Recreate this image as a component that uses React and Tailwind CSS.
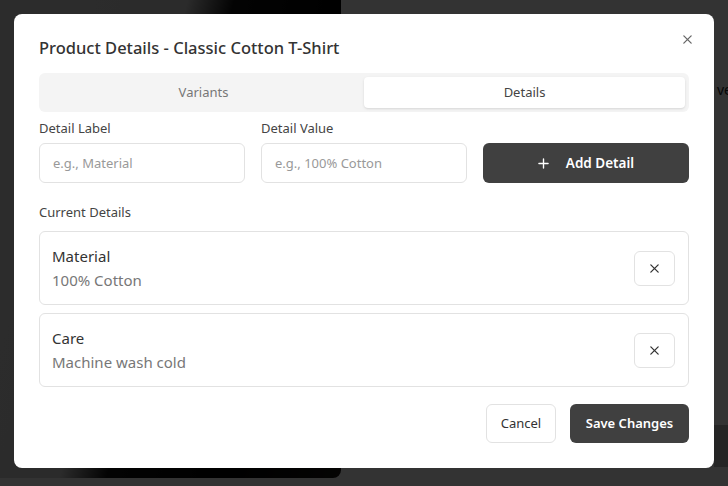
import React, { useState } from "react";

const font = { fontFamily: '"Noto Sans", "Open Sans", Arial, sans-serif' };

function XIcon({ className }) {
  return (
    <svg viewBox="0 0 12 12" className={className} fill="none" stroke="currentColor" strokeWidth="1.4" strokeLinecap="round">
      <path d="M2 2 L10 10 M10 2 L2 10" />
    </svg>
  );
}

function PlusIcon({ className }) {
  return (
    <svg viewBox="0 0 12 12" className={className} fill="none" stroke="currentColor" strokeWidth="1.5" strokeLinecap="round">
      <path d="M6 1 V11 M1 6 H11" />
    </svg>
  );
}

export default function App() {
  const [tab, setTab] = useState("details");
  const [details, setDetails] = useState([
    { label: "Material", value: "100% Cotton" },
    { label: "Care", value: "Machine wash cold" },
  ]);

  return (
    <div className="relative w-[728px] h-[486px] overflow-hidden bg-white" style={font}>
      {/* page behind the dialog */}
      <div className="flex h-full">
        <div className="shrink-0 w-[341px] h-[478px] rounded-br-lg bg-[linear-gradient(105deg,#dcdcdc_0%,#d6d6d6_40%,#111_50%,#000_75%,#1a1714_100%)]" />
        <div className="flex-1 min-w-0 flex flex-col justify-between">
          <div className="pt-[80px] pl-[376px] text-[14px] leading-5 text-[#222] whitespace-nowrap">ve</div>
          <div className="ml-[373px] mb-[19px] h-[42px] bg-[#b8b8b8]" />
        </div>
      </div>

      {/* overlay */}
      <div className="absolute inset-0 bg-black/80" />

      {/* dialog */}
      <div className="absolute left-[14px] top-[14px] w-[700px] bg-white rounded-lg px-[25px] pt-[22px] pb-[25px]">
        <button className="absolute right-[21px] top-[20px] text-[#666]">
          <XIcon className="w-[11px] h-[11px]" />
        </button>

        <h2 className="text-[16.5px] leading-6 font-medium text-[#333]">Product Details - Classic Cotton T-Shirt</h2>

        <div className="mt-[13px] grid grid-cols-2 p-1 bg-[#f4f4f4] rounded-md">
          <button
            onClick={() => setTab("variants")}
            className={`h-[31px] rounded text-[13px] ${tab === "variants" ? "bg-white text-[#444] shadow-sm" : "text-[#777]"}`}
          >
            Variants
          </button>
          <button
            onClick={() => setTab("details")}
            className={`h-[31px] rounded text-[13px] ${tab === "details" ? "bg-white text-[#444] shadow-sm" : "text-[#777]"}`}
          >
            Details
          </button>
        </div>

        <div className="mt-[7px] grid grid-cols-3 gap-4 items-end">
          <div>
            <label className="block text-[13px] leading-[18px] text-[#444] mb-[6px]">Detail Label</label>
            <input
              placeholder="e.g., Material"
              className="w-full h-10 px-[13px] text-[13px] border border-[#e2e2e2] rounded-md outline-none placeholder:text-[#999]"
            />
          </div>
          <div>
            <label className="block text-[13px] leading-[18px] text-[#444] mb-[6px]">Detail Value</label>
            <input
              placeholder="e.g., 100% Cotton"
              className="w-full h-10 px-[13px] text-[13px] border border-[#e2e2e2] rounded-md outline-none placeholder:text-[#999]"
            />
          </div>
          <button className="h-10 flex items-center justify-center gap-[17px] bg-[#404040] text-white rounded-md text-[13.5px] font-semibold">
            <PlusIcon className="w-[11px] h-[11px]" />
            Add Detail
          </button>
        </div>

        <div className="mt-[20px] text-[13px] leading-[18px] text-[#444]">Current Details</div>

        <div className="mt-[10px] flex flex-col gap-[8px]">
          {details.map((d, i) => (
            <div key={d.label} className="flex items-center justify-between border border-[#e2e2e2] rounded-md py-3 pl-3 pr-[13px]">
              <div>
                <div className="text-[15px] leading-6 text-[#333]">{d.label}</div>
                <div className="text-[15px] leading-6 text-[#777]">{d.value}</div>
              </div>
              <button
                onClick={() => setDetails(details.filter((_, j) => j !== i))}
                className="w-[41px] h-[35px] flex items-center justify-center border border-[#e2e2e2] rounded-md text-[#333]"
              >
                <XIcon className="w-[11px] h-[11px]" />
              </button>
            </div>
          ))}
        </div>

        <div className="mt-[17px] flex justify-end gap-[14px]">
          <button className="h-[39px] w-[70px] border border-[#e2e2e2] rounded-md text-[13px] text-[#333]">Cancel</button>
          <button className="h-[39px] w-[119px] bg-[#404040] text-white rounded-md text-[13px] font-semibold">Save Changes</button>
        </div>
      </div>
    </div>
  );
}
